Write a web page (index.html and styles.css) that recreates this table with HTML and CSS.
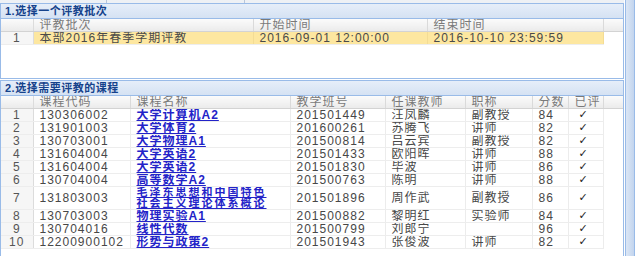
FILE: index.html
```html
<!DOCTYPE html>
<html>
<head>
<meta charset="utf-8">
<link rel="stylesheet" href="styles.css">
</head>
<body>
<div class="page">
  <div class="main">
    <div class="topstrip">
      <div class="tab t1"></div>
      <div class="tab t2"></div>
      <div class="tab t3"></div>
    </div>
    <div class="panel p1">
      <div class="phead">1.选择一个评教批次</div>
      <div class="pbody">
        <table class="grid">
          <colgroup><col class="c-rn"><col class="c-pc"><col class="c-st"><col class="c-et"><col></colgroup>
          <thead>
            <tr><th class="rn"></th><th>评教批次</th><th>开始时间</th><th>结束时间</th><th class="fill"></th></tr>
          </thead>
          <tbody>
            <tr class="sel"><td class="rn">1</td><td>本部2016年春季学期评教</td><td>2016-09-01 12:00:00</td><td>2016-10-10 23:59:59</td><td class="fill"></td></tr>
          </tbody>
        </table>
      </div>
    </div>
    <div class="panel p2">
      <div class="phead">2.选择需要评教的课程</div>
      <div class="pbody">
        <table class="grid">
          <colgroup><col class="c-rn"><col class="c-code"><col class="c-name"><col class="c-cls"><col class="c-tch"><col class="c-ttl"><col class="c-sc"><col class="c-ok"><col></colgroup>
          <thead>
            <tr><th class="rn"></th><th>课程代码</th><th>课程名称</th><th>教学班号</th><th>任课教师</th><th>职称</th><th>分数</th><th>已评</th><th class="fill"></th></tr>
          </thead>
          <tbody>
            <tr><td class="rn">1</td><td>130306002</td><td><a>大学计算机A2</a></td><td>201501449</td><td>汪凤麟</td><td>副教授</td><td>84</td><td class="ok">✓</td><td class="fill"></td></tr>
            <tr><td class="rn">2</td><td>131901003</td><td><a>大学体育2</a></td><td>201600261</td><td>苏腾飞</td><td>讲师</td><td>82</td><td class="ok">✓</td><td class="fill"></td></tr>
            <tr><td class="rn">3</td><td>130703001</td><td><a>大学物理A1</a></td><td>201500814</td><td>吕云宾</td><td>副教授</td><td>82</td><td class="ok">✓</td><td class="fill"></td></tr>
            <tr><td class="rn">4</td><td>131604004</td><td><a>大学英语2</a></td><td>201501433</td><td>欧阳晖</td><td>讲师</td><td>88</td><td class="ok">✓</td><td class="fill"></td></tr>
            <tr><td class="rn">5</td><td>131604004</td><td><a>大学英语2</a></td><td>201501830</td><td>毕波</td><td>讲师</td><td>86</td><td class="ok">✓</td><td class="fill"></td></tr>
            <tr><td class="rn">6</td><td>130704004</td><td><a>高等数学A2</a></td><td>201500763</td><td>陈明</td><td>讲师</td><td>88</td><td class="ok">✓</td><td class="fill"></td></tr>
            <tr class="tall"><td class="rn">7</td><td>131803003</td><td class="two"><a>毛泽东思想和中国特色<br>社会主义理论体系概论</a></td><td>201501896</td><td>周作武</td><td>副教授</td><td>86</td><td class="ok">✓</td><td class="fill"></td></tr>
            <tr><td class="rn">8</td><td>130703003</td><td><a>物理实验A1</a></td><td>201500882</td><td>黎明红</td><td>实验师</td><td>84</td><td class="ok">✓</td><td class="fill"></td></tr>
            <tr><td class="rn">9</td><td>130704016</td><td><a>线性代数</a></td><td>201500799</td><td>刘郎宁</td><td></td><td>96</td><td class="ok">✓</td><td class="fill"></td></tr>
            <tr><td class="rn">10</td><td>12200900102</td><td><a>形势与政策2</a></td><td>201501943</td><td>张俊波</td><td>讲师</td><td>82</td><td class="ok">✓</td><td class="fill"></td></tr>
          </tbody>
        </table>
      </div>
    </div>
  </div>
  <div class="side"></div>
</div>
</body>
</html>
```
FILE: styles.css
```css
html, body {
  margin: 0;
  padding: 0;
  background: #ffffff;
}
body {
  width: 635px;
  height: 256px;
  overflow: hidden;
  font-family: "Liberation Sans", "Noto Sans CJK SC", sans-serif;
  font-size: 12px;
  letter-spacing: 1px;
  color: #444;
}
.page {
  display: flex;
  height: 256px;
}
.main {
  width: 625px;
  display: flex;
  flex-direction: column;
}
.side {
  width: 8px;
  margin-left: 1px;
  border-left: 1px solid #99bbe8;
  border-right: 1px solid #99bbe8;
  background: linear-gradient(to right, #dbe6f5, #c3d5ee);
}
.topstrip {
  height: 3px;
  display: flex;
  background: #eef1f5;
}
.tab {
  border-right: 1px solid #b8c6da;
}
.t1 { width: 106px; }
.t2 { width: 137px; }
.t3 { flex: 1; border-right: none; }
.panel {
  border: 1px solid #99bbe8;
  display: flex;
  flex-direction: column;
}
.p1 {
  height: 74px;
}
.p2 {
  margin-top: 1px;
  flex: 1;
  border-bottom: none;
}
.phead {
  height: 14px;
  line-height: 14px;
  padding-left: 4px;
  font-size: 11px;
  letter-spacing: 0.5px;
  font-weight: bold;
  color: #15428b;
  background: linear-gradient(#e6eef9, #d5e2f3);
  border-bottom: 1px solid #99bbe8;
}
.pbody {
  flex: 1;
  background: #fff;
  overflow: hidden;
}
.grid {
  width: 100%;
  table-layout: fixed;
  border-collapse: collapse;
}
.c-rn { width: 32px; }
.c-pc { width: 220px; }
.c-st { width: 174px; }
.c-et { width: 176px; }
.c-code { width: 97px; }
.c-name { width: 160px; }
.c-cls { width: 95px; }
.c-tch { width: 80px; }
.c-ttl { width: 67px; }
.c-sc { width: 36px; }
.c-ok { width: 35px; }
.grid th {
  height: 12px;
  padding: 0 0 0 6px;
  font-weight: normal;
  text-align: left;
  color: #7a7a7a;
  line-height: 12px;
  background: linear-gradient(#fbfbfb, #ebebeb);
  border-right: 1px solid #dadada;
  border-bottom: 1px solid #d3d3d3;
  white-space: nowrap;
  overflow: hidden;
}
.grid th.fill {
  border-right: none;
}
.grid td {
  height: 12px;
  padding: 0 0 0 6px;
  line-height: 12px;
  border-right: 1px solid #ececec;
  border-bottom: 1px solid #ededed;
  white-space: nowrap;
  overflow: hidden;
  text-overflow: clip;
  color: #474747;
}
.grid td.fill {
  border: none;
}
.grid td.rn, .grid th.rn {
  padding: 0;
  text-align: center;
  background: #f6f6f6;
  color: #555;
  border-right: 1px solid #dcdcdc;
}
.grid th.rn {
  background: linear-gradient(#fbfbfb, #ebebeb);
}
.sel td {
  background: #fde7a0;
  color: #4a4a4a;
  border-right-color: #f3dc95;
}
.sel td.fill {
  background: #fff;
}
.grid a {
  color: #2323c8;
  font-weight: bold;
  text-decoration: underline;
}
.grid td.two {
  white-space: normal;
  font-size: 11px;
  letter-spacing: 2px;
  line-height: 11px;
}
.tall td {
  height: 21px;
}
.grid td.ok {
  padding-left: 10px;
  font-family: "DejaVu Sans", sans-serif;
  font-size: 11px;
  color: #222;
}
```
